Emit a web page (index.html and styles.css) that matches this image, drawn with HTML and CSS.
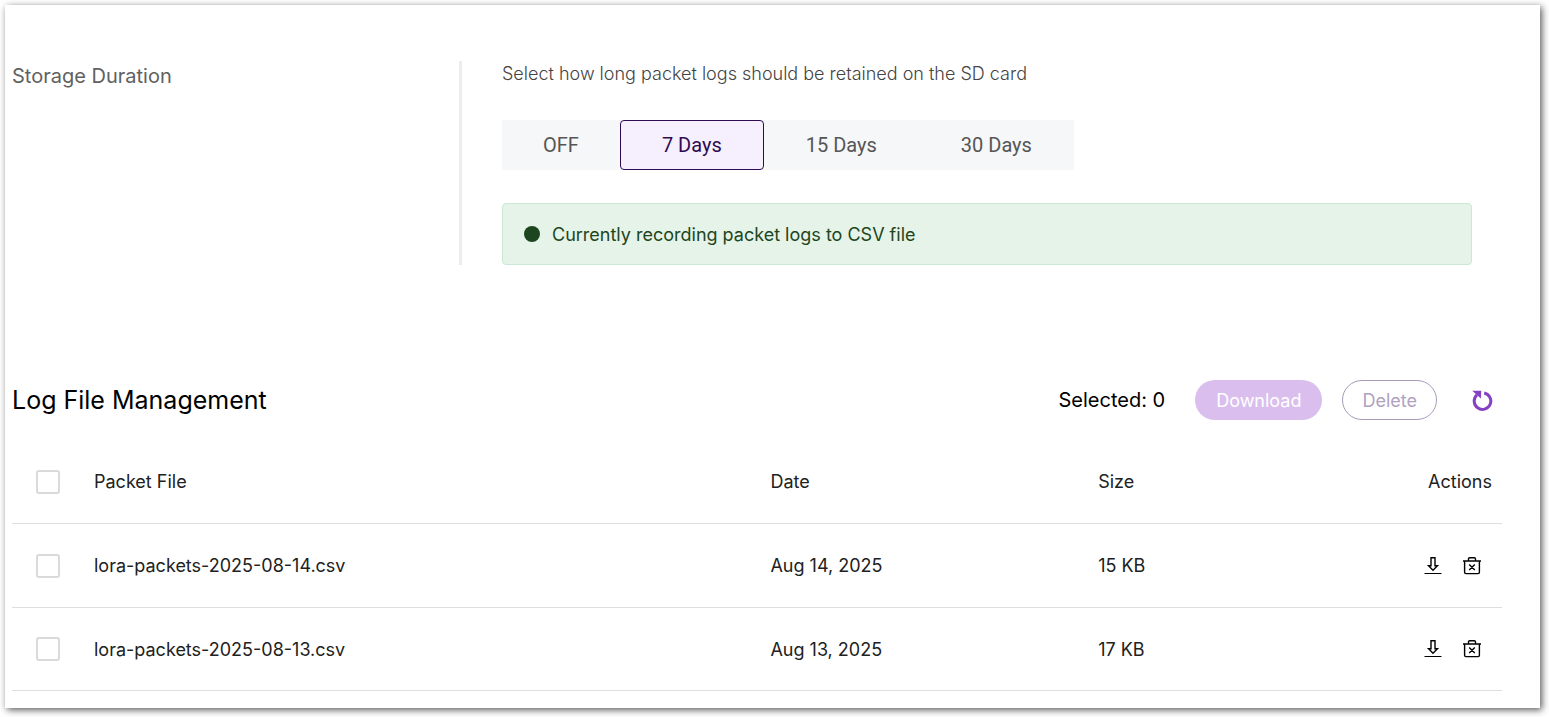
FILE: index.html
```
<!DOCTYPE html>
<html lang="en">
<head>
    <meta charset="UTF-8">
    <meta name="viewport" content="width=device-width, initial-scale=1.0">
    <title>Packet Logs</title>
    <link rel="stylesheet" href="styles.css">
</head>
<body>

    <!-- shared icons -->
    <svg class="icon-defs" aria-hidden="true">
        <symbol id="icon-download" viewBox="0 0 18 18">
            <path d="M7 .7h4v8h2.500L9 13.300 4.500 8.700H7z" fill="none" stroke="currentColor" stroke-width="1.400"/>
            <path d="M.5 16.500h17" stroke="currentColor" stroke-width="1"/>
        </symbol>
        <symbol id="icon-trash" viewBox="0 0 20 18">
            <path d="M1 4h18M2.600 4v11.300q0 1.300 1.300 1.300h12.200q1.300 0 1.300-1.300V4M6.500 4V1.900q0-1.200 1.300-1.200h4.400q1.300 0 1.300 1.200V4M7.200 7.500l5.600 5.600M12.800 7.500l-5.600 5.600" fill="none" stroke="currentColor" stroke-width="1.400"/>
        </symbol>
    </svg>

    <main class="panel">

        <section class="setting">
            <h2 class="setting-title">Storage Duration</h2>
            <div class="setting-body">
                <p class="setting-text">Select how long packet logs should be retained on the SD card</p>
                <div class="segments">
                    <button type="button" class="segment">OFF</button>
                    <button type="button" class="segment active">7 Days</button>
                    <button type="button" class="segment">15 Days</button>
                    <button type="button" class="segment">30 Days</button>
                </div>
                <div class="alert"><span class="dot"></span>Currently recording packet logs to CSV file</div>
            </div>
        </section>

        <section class="logs">
            <div class="toolbar">
                <h1 class="logs-title">Log File Management</h1>
                <span class="selected">Selected: 0</span>
                <button type="button" class="btn btn-download" disabled>Download</button>
                <button type="button" class="btn btn-delete" disabled>Delete</button>
                <button type="button" class="icon-button refresh" aria-label="Refresh">
                    <svg width="22" height="22" viewBox="0 0 22 22">
                        <path d="M13.200 4a8.300 8.300 0 1 1-7.200 1.900" fill="none" stroke="currentColor" stroke-width="3"/>
                        <path d="M1.200 1.700l9 .1-.300 7.800z" fill="currentColor"/>
                    </svg>
                </button>
            </div>

            <table class="files">
                <thead>
                    <tr>
                        <th class="col-check"><input type="checkbox" aria-label="Select all files"></th>
                        <th>Packet File</th>
                        <th class="col-date">Date</th>
                        <th class="col-size">Size</th>
                        <th class="col-actions">Actions</th>
                    </tr>
                </thead>
                <tbody>
                    <tr>
                        <td class="col-check"><input type="checkbox" id="file1"></td>
                        <td><label for="file1">lora-packets-2025-08-14.csv</label></td>
                        <td>Aug 14, 2025</td>
                        <td>15 KB</td>
                        <td>
                            <div class="actions">
                                <button type="button" class="icon-button" aria-label="Download file"><svg width="18" height="18"><use href="#icon-download"/></svg></button>
                                <button type="button" class="icon-button" aria-label="Delete file"><svg width="20" height="18"><use href="#icon-trash"/></svg></button>
                            </div>
                        </td>
                    </tr>
                    <tr>
                        <td class="col-check"><input type="checkbox" id="file2"></td>
                        <td><label for="file2">lora-packets-2025-08-13.csv</label></td>
                        <td>Aug 13, 2025</td>
                        <td>17 KB</td>
                        <td>
                            <div class="actions">
                                <button type="button" class="icon-button" aria-label="Download file"><svg width="18" height="18"><use href="#icon-download"/></svg></button>
                                <button type="button" class="icon-button" aria-label="Delete file"><svg width="20" height="18"><use href="#icon-trash"/></svg></button>
                            </div>
                        </td>
                    </tr>
                </tbody>
            </table>
        </section>

    </main>

</body>
</html>
```
FILE: styles.css
```
* {
    box-sizing: border-box;
}

body {
    margin: 0;
    padding: 5px 9px 9px 5px;
    background: #fff;
    color: #212121;
    font-family: Inter, "Liberation Sans", sans-serif;
    font-size: 18px;
}

h1, h2, p {
    margin: 0;
    font-weight: 400;
}

button {
    font-family: inherit;
    cursor: pointer;
}

.icon-defs {
    display: none;
}

.panel {
    padding: 56px 38px 17px 7px;
    background: #fff;
    box-shadow: 2px 2px 7px rgba(0, 0, 0, 0.65);
}

/* Storage duration */
.setting {
    display: flex;
    color: #616161;
}

.setting-title {
    width: 30%;
    font-size: 20px;
    line-height: 30px;
}

.setting-body {
    flex: 1;
    padding: 0 30px 0 40px;
    border-left: 3px solid #ededed;
}

.setting-text {
    color: #444;
    font-weight: 300;
    line-height: 26px;
}

.segments {
    display: inline-flex;
    margin: 33px 0;
    background: #f5f7f9;
    vertical-align: top;
}

.segment {
    height: 50px;
    padding: 0 41px;
    border: 1px solid transparent;
    border-radius: 4px;
    background: none;
    color: #555;
    font-family: Roboto, sans-serif;
    font-size: 20px;
}

.segment:first-child {
    padding: 0 40px;
}

.segment.active {
    border-color: #2f0b52;
    background: #f6f0fe;
    color: #2f0b52;
}

.alert {
    display: flex;
    align-items: center;
    gap: 12px;
    height: 62px;
    padding: 0 21px;
    border: 1px solid #cbe8d5;
    border-radius: 4px;
    background: #e5f3e8;
    color: #1d4620;
}

.dot {
    width: 16px;
    height: 16px;
    border-radius: 50%;
    background: #1d4620;
}

/* Log files */
.logs {
    margin-top: 115px;
}

.toolbar {
    display: flex;
    align-items: center;
    color: #000;
}

.logs-title {
    flex: 1;
    font-size: 25px;
}

.selected {
    margin-right: 30px;
    font-size: 20px;
}

.btn {
    height: 40px;
    margin-right: 20px;
    padding: 0 21px;
    border: 0;
    border-radius: 20px;
    font-size: 18px;
}

.btn-download {
    background: #dabfee;
    color: #fff;
}

.btn-delete {
    padding: 0 19px;
    border: 1px solid #aa9aba;
    background: #fff;
    color: #b0a2c1;
}

.icon-button {
    display: flex;
    padding: 0;
    border: 0;
    background: none;
    color: #000;
}

.refresh {
    margin: 0 9px 0 14px;
    color: #8640c4;
}

.files {
    width: 100%;
    margin-top: 20px;
    border-collapse: separate;
    border-spacing: 0;
    table-layout: fixed;
}

.files th,
.files td {
    height: 84px;
    padding: 0;
    border-bottom: 1px solid #dedede;
    font-weight: 400;
    text-align: left;
}

.files tr:last-child td {
    height: 83px;
}

.files .col-check {
    width: 82px;
    padding-left: 24px;
}

.col-date {
    width: 22%;
}

.col-size {
    width: 22%;
}

.files .col-actions {
    width: 76px;
    padding-right: 10px;
    text-align: right;
}

.files input {
    display: block;
    width: 24px;
    height: 24px;
    margin: 0;
    border: 2px solid #dadada;
    border-radius: 3px;
    background: #fff;
    appearance: none;
}

.files input:checked {
    background: #8640c4;
}

.actions {
    display: flex;
    justify-content: flex-end;
    gap: 20px;
    padding-right: 20px;
}
```
